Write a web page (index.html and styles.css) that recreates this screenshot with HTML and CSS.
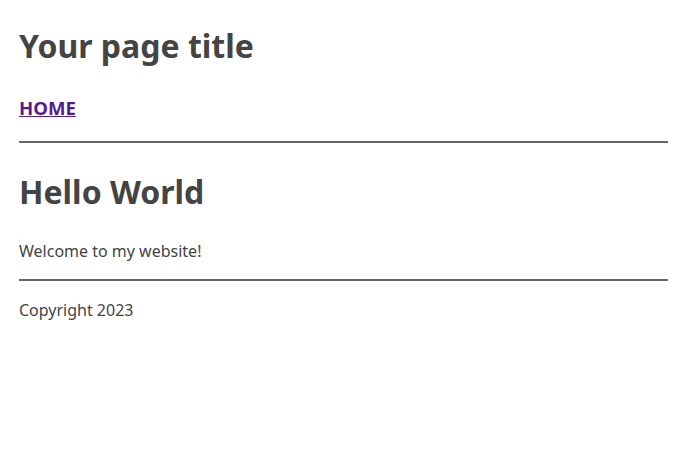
FILE: index.html
```html
<!DOCTYPE html>
<html>
<head>
<meta charset="utf-8">
<link rel="stylesheet" href="styles.css">
</head>
<body>
<header class="site-header">
  <h1 class="site-title">Your page title</h1>
  <nav class="nav"><a class="nav-link" href="#">HOME</a></nav>
</header>
<main class="content">
  <h2 class="page-heading">Hello World</h2>
  <p class="text">Welcome to my website!</p>
</main>
<footer class="footer">
  <p class="text">Copyright 2023</p>
</footer>
</body>
</html>
```
FILE: styles.css
```css
html, body { margin: 0; padding: 0; background: #fff; }
body {
  font-family: "Noto Sans", sans-serif;
  color: #444;
  font-size: 16px;
  line-height: 1.5;
  padding: 0 15px 0 19px;
}
.site-header { border-bottom: 2px solid #666; }
.site-title { font-size: 32px; font-weight: 700; margin: 0; padding-top: 27px; line-height: 1.2; }
.nav { padding: 29px 0 18px; line-height: 27px; }
.nav-link { color: #551a8b; font-weight: 700; font-size: 18.6px; }
.content { border-bottom: 2px solid #666; }
.page-heading { font-size: 32px; margin: 0; padding-top: 30px; line-height: 1.2; }
.text { margin: 0; }
.content .text { padding: 27px 0 16px; }
.footer .text { padding-top: 17px; }
```
